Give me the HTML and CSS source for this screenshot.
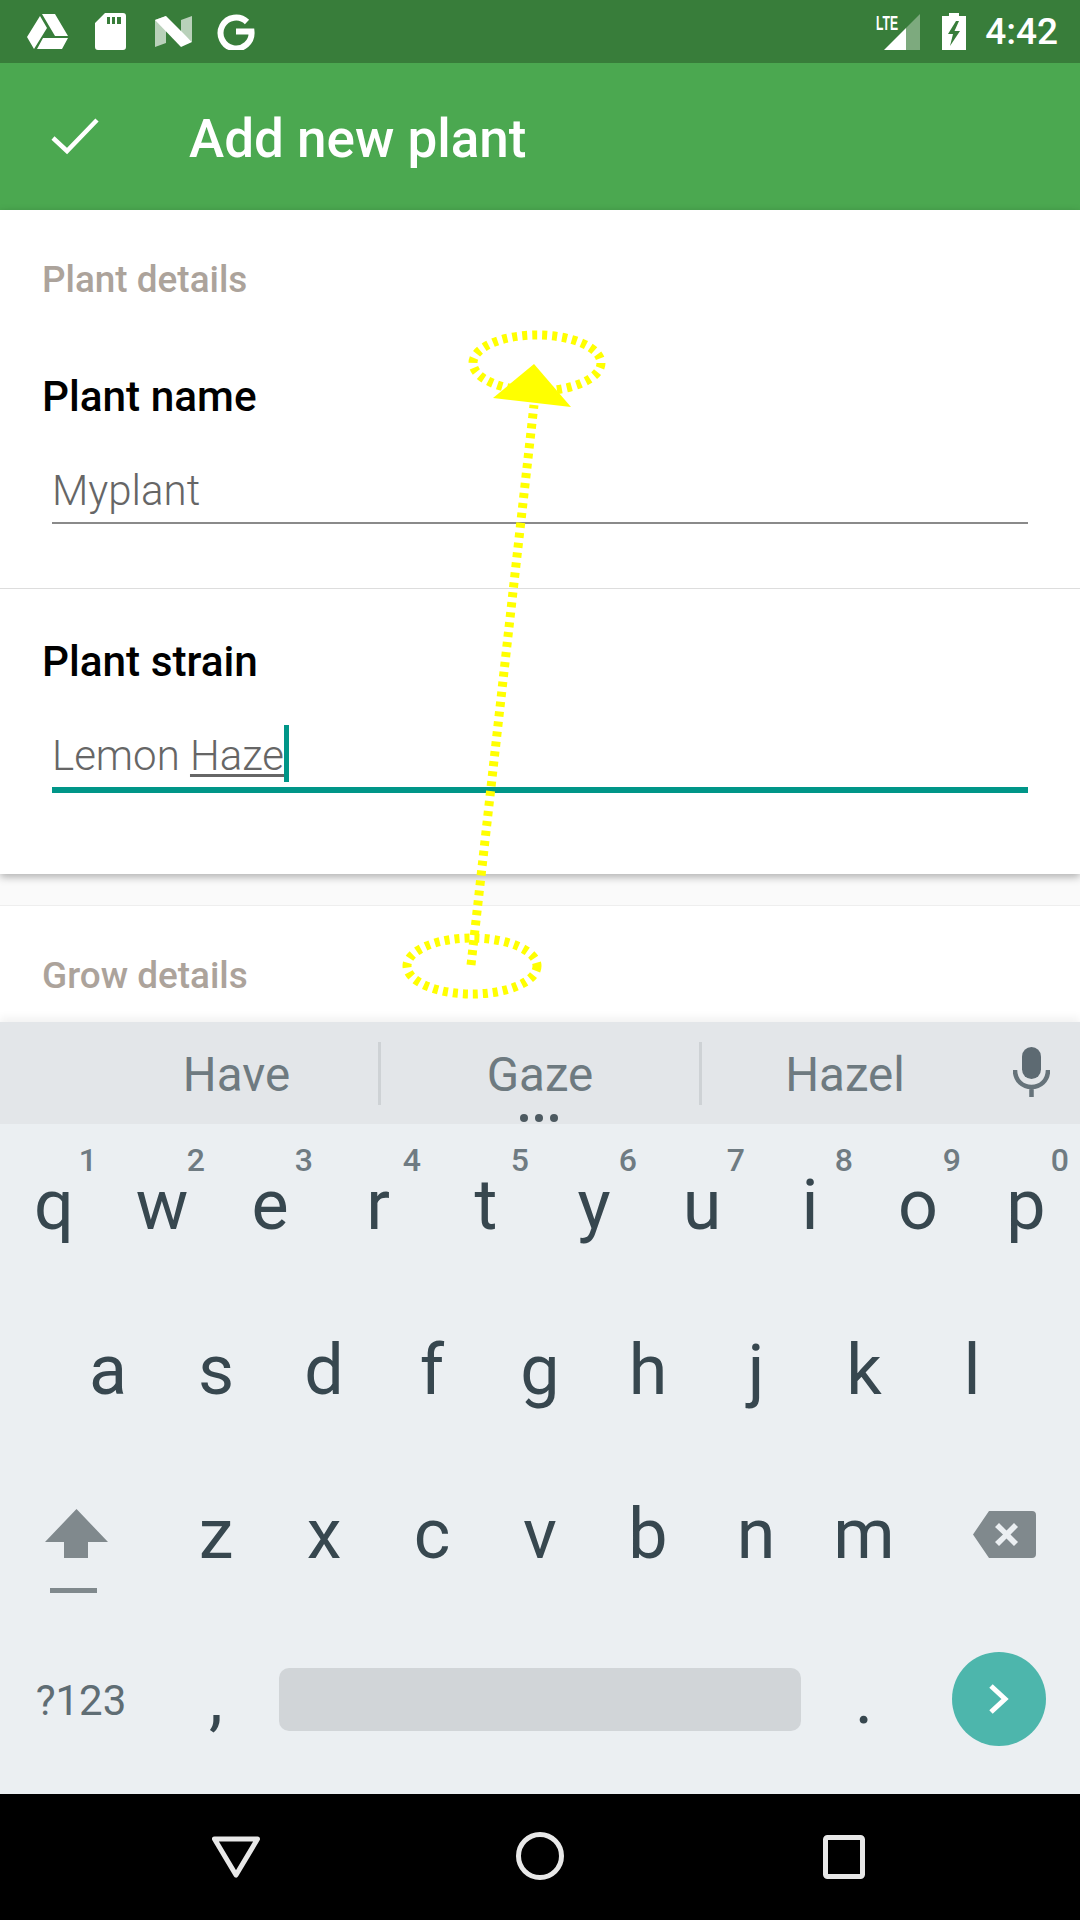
FILE: index.html
```html
<!DOCTYPE html>
<html lang="en">
<head>
  <meta charset="UTF-8">
  <title>Add new plant</title>
  <link rel="stylesheet" href="styles.css">
</head>
<body>
  <div class="phone">
    <div class="status-bar">
      <svg class="ico-drive" viewBox="27 13 41 35"><path fill="#fff" d="M27 36 40 15 47 27 34 48ZM42 13H55L68 35H55ZM37 48H62L68 37H43Z"/></svg>
      <svg class="ico-sd" viewBox="95 13 31 37"><path fill="#fff" fill-rule="evenodd" d="M105 13H123Q126 13 126 16V47Q126 50 123 50H98Q95 50 95 47V23ZM107 17V24H110V17ZM112 17V24H115V17ZM117 17V24H121V17Z"/></svg>
      <svg class="ico-n" viewBox="154 15 39 33"><path fill="#fff" opacity=".65" d="M155 20 166 16V43L155 47ZM181 20 192 16V42L181 32Z"/><path fill="#fff" d="M155 20 166 16 192 42 181 47Z"/></svg>
      <svg class="ico-g" viewBox="217 13 38 37"><path fill="none" stroke="#fff" stroke-width="6" d="M247 22A15.5 15.5 0 1 0 251.5 31.5H236"/></svg>
      <svg class="ico-signal" viewBox="877 6 44 44">
        <text x="877" y="29" class="lte" textLength="22" lengthAdjust="spacingAndGlyphs">LTE</text>
        <path fill="#fff" d="M885 49 907 27V49Z"/>
        <path fill="#fff" opacity=".35" d="M907 27 921 13V49H907Z"/>
      </svg>
      <svg class="ico-battery" viewBox="943 12 24 38"><path fill="#fff" fill-rule="evenodd" d="M950 12H960V15H967V49H943V15H950ZM957 20 949 33H954L951 45 961 30H955.5L960 20Z"/></svg>
      <span class="clock">4:42</span>
    </div>

    <header class="app-bar">
      <svg class="ico-check" viewBox="0 0 50 40"><path fill="none" stroke="#fff" stroke-width="4.5" d="M3 21 17 34 47 3"/></svg>
      <h1>Add new plant</h1>
    </header>

    <main class="content">
      <section class="card card-first">
        <h2 class="card-title">Plant details</h2>
        <div class="field field-name">
          <label class="field-label">Plant name</label>
          <div class="field-input">Myplant</div>
        </div>
        <div class="field field-strain">
          <label class="field-label">Plant strain</label>
          <div class="field-input is-focused">Lemon <span class="composing">Haze</span><span class="caret"></span></div>
        </div>
      </section>
      <section class="card card-second">
        <h2 class="card-title">Grow details</h2>
      </section>
    </main>

    <div class="keyboard">
      <div class="suggestions">
        <span class="sug sug-1">Have</span>
        <span class="sug-sep"></span>
        <span class="sug sug-2">Gaze<span class="sug-dots"></span></span>
        <span class="sug-sep"></span>
        <span class="sug sug-3">Hazel</span>
        <svg class="ico-mic" viewBox="0 0 37 50"><rect x="9" y="0" width="19" height="32" rx="9.5" fill="#5d6a72"/><path fill="none" stroke="#66737a" stroke-width="4.5" d="M2 23C2 34 10 40 18.5 40S35 34 35 23M18.5 40V50"/></svg>
      </div>
      <div class="keys">
        <div class="key-row">
          <span class="key">q<i>1</i></span>
          <span class="key">w<i>2</i></span>
          <span class="key">e<i>3</i></span>
          <span class="key">r<i>4</i></span>
          <span class="key">t<i>5</i></span>
          <span class="key">y<i>6</i></span>
          <span class="key">u<i>7</i></span>
          <span class="key">i<i>8</i></span>
          <span class="key">o<i>9</i></span>
          <span class="key">p<i>0</i></span>
        </div>
        <div class="key-row row-home">
          <span class="key">a</span>
          <span class="key">s</span>
          <span class="key">d</span>
          <span class="key">f</span>
          <span class="key">g</span>
          <span class="key">h</span>
          <span class="key">j</span>
          <span class="key">k</span>
          <span class="key">l</span>
        </div>
        <div class="key-row">
          <span class="key key-wide key-shift">
            <svg viewBox="44 1510 63 84"><path fill="#80898d" d="M75.5 1510 107 1543H87V1559H63V1543H44ZM49 1589H96V1594H49Z"/></svg>
          </span>
          <span class="key">z</span>
          <span class="key">x</span>
          <span class="key">c</span>
          <span class="key">v</span>
          <span class="key">b</span>
          <span class="key">n</span>
          <span class="key">m</span>
          <span class="key key-wide key-back">
            <svg viewBox="0 0 63 47"><path fill="#80898d" fill-rule="evenodd" d="M16 0H59Q63 0 63 4V43Q63 47 59 47H16L0 23.5ZM26 12 22 16 30 23.5 22 31 26 35 33.5 27.5 41 35 45 31 37.500 23.5 45 16 41 12 33.5 19.500Z"/></svg>
          </span>
        </div>
        <div class="key-row">
          <span class="key key-wide key-symbols">?123</span>
          <span class="key key-punct">,</span>
          <span class="key-space"><span class="space-bar"></span></span>
          <span class="key key-punct">.</span>
          <span class="key key-wide key-enter">
            <span class="enter-btn"><svg viewBox="0 0 22 32"><path fill="none" stroke="#fff" stroke-width="5" d="M3 3 17 16 3 29"/></svg></span>
          </span>
        </div>
      </div>
    </div>

    <nav class="nav-bar">
      <svg class="nav-back" viewBox="0 0 48 42"><path fill="none" stroke="#e8e8e8" stroke-width="5" stroke-linejoin="round" d="M2.500 3H45.500L24 39Z"/></svg>
      <svg class="nav-home" viewBox="0 0 48 48"><circle cx="24" cy="24" r="21.500" fill="none" stroke="#e8e8e8" stroke-width="5"/></svg>
      <svg class="nav-recent" viewBox="0 0 42 44"><rect x="2.500" y="2.500" width="37" height="39" rx="2" fill="none" stroke="#e8e8e8" stroke-width="5"/></svg>
    </nav>

    <!-- yellow swipe annotation drawn over the screenshot -->
    <svg class="swipe-mark" viewBox="0 0 1080 1920">
      <g fill="none" stroke="#ff0" stroke-width="9" stroke-dasharray="5 5">
        <ellipse cx="537" cy="363" rx="64" ry="28"/>
        <ellipse cx="472" cy="966" rx="65" ry="28"/>
        <path d="M471 965 534 405"/>
      </g>
      <path fill="#ff0" d="M534 364 571 407 493 398Z"/>
    </svg>
  </div>
</body>
</html>
```

FILE: styles.css
```css
* {
  box-sizing: border-box;
}
body {
  margin: 0;
  font-family: Roboto, "Liberation Sans", sans-serif;
}
.phone {
  position: relative;
  width: 1080px;
  height: 1920px;
  display: flex;
  flex-direction: column;
  overflow: hidden;
  background: #fff;
}

/* status bar */
.status-bar {
  height: 63px;
  flex: none;
  display: flex;
  align-items: center;
  padding: 0 22px 0 27px;
  background: #387d3a;
  color: #fff;
}
.ico-drive { width: 41px; height: 35px; }
.ico-sd { width: 31px; height: 37px; margin-left: 27px; }
.ico-n { width: 39px; height: 33px; margin-left: 28px; }
.ico-g { width: 38px; height: 37px; margin-left: 24px; }
.ico-signal { width: 44px; height: 44px; margin: -6px 0 0 auto; }
.ico-battery { width: 24px; height: 38px; margin-left: 22px; }
.lte {
  font-family: "Liberation Sans", sans-serif;
  font-size: 21px;
  font-weight: 700;
  fill: #fff;
}
.clock {
  margin-left: 19px;
  font-size: 37px;
  font-weight: 500;
}

/* app bar */
.app-bar {
  height: 147px;
  flex: none;
  display: flex;
  align-items: center;
  padding-left: 50px;
  background: #4ba850;
  color: #fff;
}
.ico-check {
  width: 50px;
  height: 40px;
}
.app-bar h1 {
  margin: 4px 0 0 89px;
  font-size: 53px;
  font-weight: 500;
}

/* form */
.content {
  flex: 1;
  min-height: 0;
  background: #fafafa;
}
.card {
  background: #fff;
}
.card-first {
  height: 664px;
  box-shadow: 0 3px 8px rgba(0, 0, 0, 0.3);
}
.card-second {
  height: 150px;
  margin-top: 31px;
  border-top: 1px solid #eee;
}
.card-title {
  margin: 0;
  padding-left: 42px;
  font-size: 36.9px;
  font-weight: 500;
  line-height: 140px;
  color: #aca39b;
}
.field {
  padding: 0 52px 64px 42px;
}
.field-strain {
  padding-top: 26px;
  border-top: 1px solid #ddd;
}
.field-label {
  display: block;
  margin-bottom: -2px;
  font-size: 42.3px;
  font-weight: 500;
  line-height: 94px;
  color: #000;
}
.field-input {
  height: 82px;
  margin-left: 10px;
  border-bottom: 2px solid #8a8a8a;
  font-size: 42px;
  font-weight: 300;
  line-height: 98px;
  color: #666;
}
.field-input.is-focused {
  position: relative;
  height: 86px;
  border-bottom: 6px solid #009688;
}
.composing {
  text-decoration: underline;
  text-decoration-thickness: 3px;
  text-decoration-skip-ink: none;
  text-underline-offset: 4px;
}
.caret {
  position: absolute;
  top: 18px;
  width: 5px;
  height: 57px;
  background: #009688;
}

/* keyboard */
.keyboard {
  height: 772px;
  flex: none;
  position: relative;
  background: #ebeff2;
  box-shadow: 0 -5px 8px rgba(0, 0, 0, 0.05);
}
.suggestions {
  position: relative;
  height: 102px;
  display: flex;
  align-items: center;
  background: #e3e6e9;
  color: #6e7a80;
  font-size: 47.5px;
}
.sug {
  position: relative;
  padding-top: 4px;
  text-align: center;
}
.sug-1 { width: 378px; padding-left: 95px; }
.sug-2 { width: 318px; }
.sug-3 { width: 286px; }
.sug-sep {
  width: 3px;
  height: 63px;
  background: #ced2d5;
}
.sug-dots {
  position: absolute;
  left: 139px;
  top: 71px;
  width: 8px;
  height: 8px;
  border-radius: 50%;
  background: #4d5a61;
  box-shadow: 15px 0 #4d5a61, 30px 0 #4d5a61;
}
.ico-mic {
  position: absolute;
  left: 1013px;
  top: 25px;
  width: 37px;
  height: 50px;
}
.keys {
  padding-top: 3px;
}
.key-row {
  display: flex;
  height: 164.5px;
}
.row-home {
  padding-left: 54px;
}
.key {
  position: relative;
  width: 108px;
  display: flex;
  align-items: center;
  justify-content: center;
  padding-bottom: 8px;
  font-size: 70px;
  color: #37474f;
}
.key i {
  position: absolute;
  top: 17px;
  right: 11px;
  font-size: 32px;
  font-style: normal;
  font-weight: 500;
  line-height: 32px;
  color: #6f7b82;
}
.key-wide {
  width: 162px;
}
.key-shift svg {
  width: 63px;
  height: 84px;
  margin: 33px 10px 0 0;
}
.key-back svg {
  width: 63px;
  height: 47px;
  margin: 0 0 0 10px;
}
.key-symbols {
  padding-bottom: 4px;
  font-size: 42px;
  color: #5f6d74;
}
.key-space {
  width: 540px;
  padding: 0 9px 7px;
  display: flex;
  align-items: center;
}
.space-bar {
  width: 100%;
  height: 63px;
  border-radius: 10px;
  background: #d1d5d8;
}
.enter-btn {
  width: 94px;
  height: 94px;
  border-radius: 50%;
  display: flex;
  align-items: center;
  justify-content: center;
  background: #4db6ac;
}
.enter-btn svg {
  width: 22px;
  height: 32px;
}

/* nav bar */
.nav-bar {
  height: 126px;
  flex: none;
  position: relative;
  background: #000;
}
.nav-bar svg {
  position: absolute;
}
.nav-back { left: 212px; top: 42px; width: 48px; height: 42px; }
.nav-home { left: 516px; top: 38px; width: 48px; height: 48px; }
.nav-recent { left: 823px; top: 41px; width: 42px; height: 44px; }

/* annotation */
.swipe-mark {
  position: absolute;
  left: 0;
  top: 0;
  width: 1080px;
  height: 1920px;
  pointer-events: none;
}
```
